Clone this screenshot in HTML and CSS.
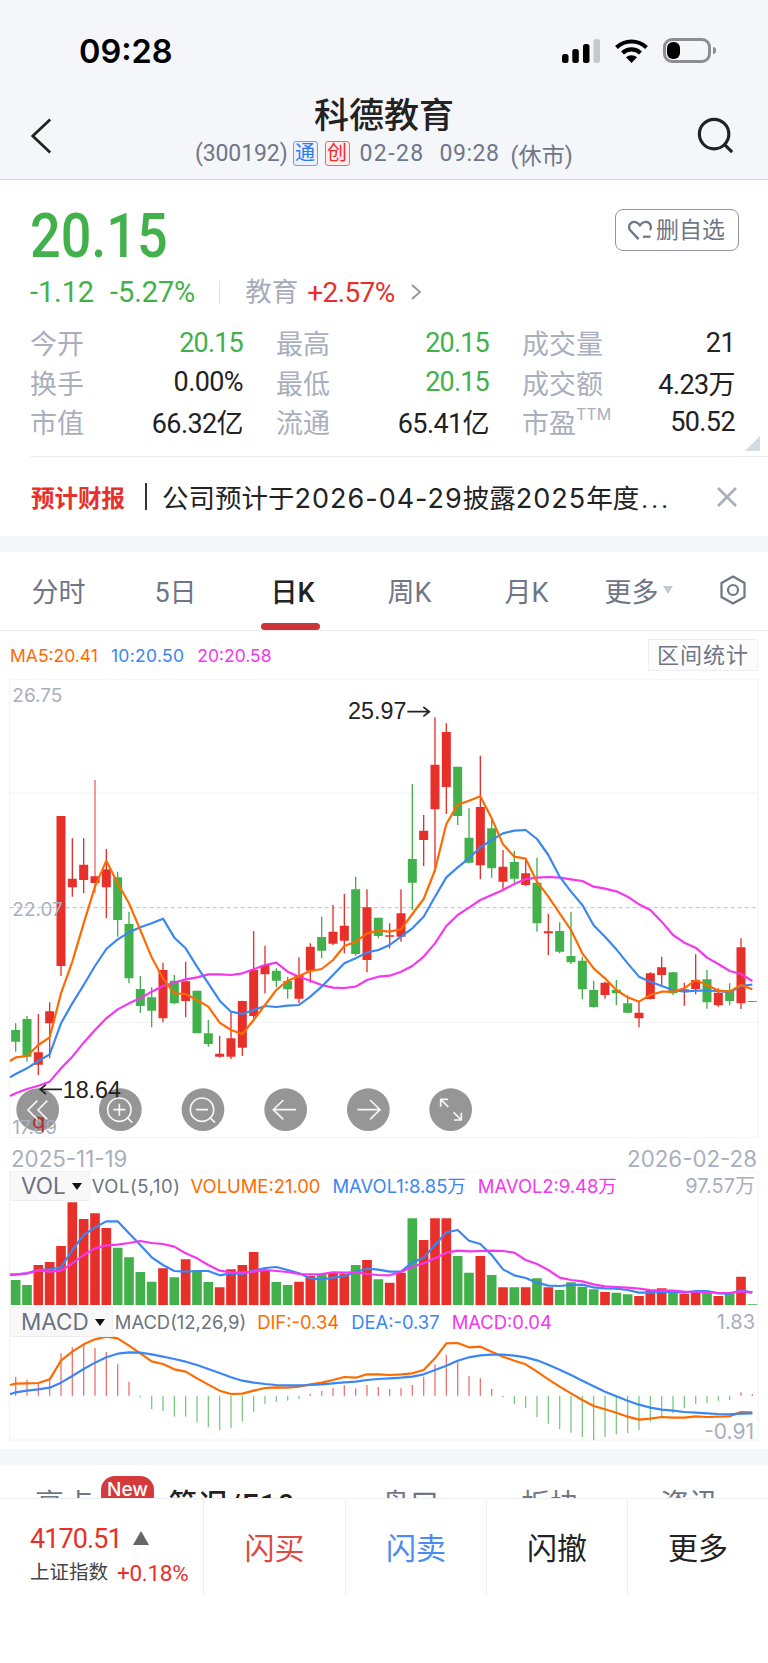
FILE: index.html
```html
<!DOCTYPE html>
<html lang="zh">
<head>
<meta charset="utf-8">
<title>科德教育</title>
<link rel="stylesheet" href="styles.css">
</head>
<body>
<div class="page">
  <header class="top">
    <div class="status">
      <span class="time">09:28</span>
      <div class="status-icons">
        <svg class="ic-signal" viewBox="0 0 38 24"><rect x="0" y="15" width="6.5" height="9" rx="2.5"/><rect x="10.3" y="10" width="6.5" height="14" rx="2.5"/><rect x="21" y="5" width="6.5" height="19" rx="2.5"/><rect class="off" x="31.5" y="0" width="6.5" height="24" rx="2.5"/></svg>
        <svg class="ic-wifi" viewBox="0 0 33 24"><path d="M1.5 8.5C10 .5 23 .5 31.500 8.500" /><path d="M7.500 14C12.800 9.200 20.200 9.200 25.500 14"/><path class="fill" d="M16.500 24L11 18.300C14 15.400 19 15.400 22 18.300Z"/></svg>
        <div class="battery"><span class="battery-level"></span></div>
      </div>
    </div>
    <nav class="nav">
      <svg class="ic-back" viewBox="0 0 24 40"><path d="M22 2L3 20L22 38"/></svg>
      <div class="nav-title">
        <h1>科德教育</h1>
        <div class="sub"><span>(300192)</span><b class="tag tag-blue">通</b><b class="tag tag-red">创</b><span class="sub-date">02-28</span><span class="sub-clock">09:28</span><span class="sub-state">(休市)</span></div>
      </div>
      <svg class="ic-search" viewBox="0 0 40 40"><circle cx="18" cy="18" r="15.500"/><path d="M29 29L37 37"/></svg>
    </nav>
  </header>

  <section class="quote">
    <div class="quote-head">
      <span class="price">20.15</span>
      <button class="fav"><svg viewBox="0 0 26 22"><path d="M23.500 10.500C26 6.500 23 1.500 18.500 2C16 2.300 14.500 3.500 13 5.500C11.500 3.500 10 2.300 7.500 2C3 1.500 0 6.500 2.500 10.500L11.500 20"/><path d="M16 17.500H24"/></svg>删自选</button>
    </div>
    <div class="change">
      <span class="green">-1.12</span><span class="green pct">-5.27%</span><i class="vline"></i><span class="sector">教育</span><span class="red sector-pct">+2.57%</span>
      <svg class="chev" viewBox="0 0 12 18"><path d="M2 2L10 9L2 16"/></svg>
    </div>
    <div class="stats">
      <div class="stat"><span class="k">今开</span><span class="v green">20.15</span></div>
      <div class="stat"><span class="k">最高</span><span class="v green">20.15</span></div>
      <div class="stat"><span class="k">成交量</span><span class="v">21</span></div>
      <div class="stat"><span class="k">换手</span><span class="v">0.00%</span></div>
      <div class="stat"><span class="k">最低</span><span class="v green">20.15</span></div>
      <div class="stat"><span class="k">成交额</span><span class="v">4.23万</span></div>
      <div class="stat"><span class="k">市值</span><span class="v">66.32亿</span></div>
      <div class="stat"><span class="k">流通</span><span class="v">65.41亿</span></div>
      <div class="stat"><span class="k">市盈<sup>TTM</sup></span><span class="v">50.52</span></div>
    </div>
    <i class="corner"></i>
  </section>

  <section class="notice">
    <b class="notice-tag">预计财报</b><i class="notice-bar"></i>
    <span class="notice-text">公司预计于<span class="num">2026-04-29</span>披露<span class="num">2025</span>年度<span class="dots">...</span></span>
    <svg class="ic-close" viewBox="0 0 20 20"><path d="M1 1L19 19M19 1L1 19"/></svg>
  </section>

  <div class="strip"></div>

  <section class="tabs">
    <span>分时</span><span>5日</span><span class="active">日K</span><span>周K</span><span>月K</span>
    <span class="more">更多<i class="tri"></i></span>
    <svg class="ic-hex" viewBox="0 0 26 30"><path d="M13 1.500L24.500 8V22L13 28.500L1.500 22V8Z"/><circle cx="13" cy="15" r="5"/></svg>
  </section>

  <section class="ma-row">
    <div class="ma"><span class="c-o">MA5:20.41</span><span class="c-b">10:20.50</span><span class="c-m">20:20.58</span></div>
    <span class="range">区间统计</span>
  </section>

  <section class="pane-main">
    <svg viewBox="0 57 2304 1401">
      <rect class="frame" x="29" y="58" width="2245" height="1374"/>
      <path class="grid" d="M29 399H2274M29 1087H2274"/>
      <path class="dash" d="M29 743H2274"/>
      <path class="wick r" d="M115 1062V1245M149 1027V1195M183 468V948M217 535V710M251 535V700M319 567V775M489 908V1087M557 905V1072M659 1127V1193M693 1057V1197M727 1022V1188M761 813V1075M795 857V1000M897 892V1030M931 850V968M999 735V855M1033 702V880M1101 688V937M1169 790V865M1203 688V845M1271 465V618M1305 172V635M1339 190V462M1441 287V658M1509 570V688M1577 595V678M1645 762V885M1815 965V1016M1917 1025V1102M1951 937V1018M1985 890V975M2053 968V1037M2087 883V1003M2155 985V1040M2223 835V1047"/>
      <path class="wick r soft" d="M285 360V700"/>
      <path class="body r" d="M115 1177V1214M149 1054V1090M183 468V918M217 656V682M251 614V660M285 649V669M319 628V682M489 930V1075M557 964V1023M659 1181V1190M693 1135V1190M727 1023V1163M761 930V1068M795 915V943M897 945V1016M931 860V932M999 815V851M1033 797V842M1101 742V900M1169 826V830M1203 760V830M1271 512V540M1305 314V448M1339 216V381M1441 441V616M1509 620V665M1577 640V675M1645 814V820M1815 968V1005M1917 1058V1075M1951 940V1017M1985 922V945M2053 988V994M2087 960V987M2155 998V1036M2223 862V1030"/>
      <path class="wick g" d="M47 1090V1175M81 1068V1205M353 635V830M387 755V970M421 948V1058M455 982V1102M523 945V1033M591 992V1120M625 1080V1160M829 925V982M863 950V1016M965 770V895M1067 650V887M1135 773V835M1237 372V750M1373 320V495M1407 445V610M1475 475V653M1543 572V668M1611 593V815M1679 787V880M1713 755V912M1747 890V1018M1781 962V1043M1849 960V1036M1883 1006V1060M2019 937V1005M2121 930V1046M2189 970V1036"/>
      <path class="body g" d="M47 1110V1145M81 1077V1190M353 652V780M387 792V955M421 987V1038M455 1012V1052M523 962V1030M591 992V1120M625 1120V1152M829 932V962M863 963V988M965 831V872M1067 688V882M1135 773V828M1237 597V668M1373 320V468M1407 533V608M1475 505V625M1543 606V656M1611 668V790M1679 813V875M1713 888V907M1747 902V988M1781 990V1041M1849 989V1000M1883 1030V1058M2019 937V1000M2121 958V1027M2189 990V1023M2257 1023V1026"/>
      <polyline class="line lm" points="30,1308 47,1300 81,1287 115,1277 149,1265 183,1225 217,1190 251,1148 285,1110 319,1075 353,1048 387,1030 421,1015 455,995 489,978 523,968 557,958 591,952 625,943 659,943 693,945 727,940 761,928 795,915 829,908 863,935 897,950 931,962 965,975 999,983 1033,984 1067,980 1101,960 1135,950 1169,947 1203,935 1237,918 1271,890 1305,850 1339,798 1373,765 1407,743 1441,720 1475,705 1509,690 1543,672 1577,657 1611,653 1645,651 1679,653 1713,658 1747,663 1781,680 1815,686 1849,694 1883,710 1917,733 1951,750 1985,785 2019,825 2053,848 2087,863 2121,893 2155,912 2189,933 2223,942 2257,963"/>
      <polyline class="line lb" points="30,1252 47,1242 81,1225 115,1203 149,1183 183,1090 217,1030 251,975 285,918 319,867 353,838 387,817 421,802 455,790 489,776 523,833 557,865 591,920 625,970 659,1022 693,1055 727,1062 761,1050 795,1038 829,1041 863,1037 897,1035 931,1010 965,980 999,945 1033,910 1067,895 1101,877 1135,870 1169,855 1203,830 1237,805 1271,770 1305,710 1339,652 1373,622 1407,595 1441,562 1475,540 1509,520 1543,512 1577,510 1611,537 1645,585 1679,650 1713,695 1747,735 1781,796 1815,830 1849,868 1883,910 1917,950 1951,965 1985,978 2019,990 2053,995 2087,992 2121,992 2155,993 2189,997 2223,978 2257,974"/>
      <polyline class="line lo" points="30,1203 47,1192 81,1188 115,1155 149,1132 183,1000 217,905 251,790 285,680 319,602 353,670 387,730 421,810 455,892 489,955 523,1000 557,1002 591,1020 625,1040 659,1088 693,1110 727,1122 761,1080 795,1035 829,990 863,962 897,948 931,933 965,927 999,900 1033,858 1067,845 1101,820 1135,812 1169,815 1203,808 1237,762 1271,717 1305,630 1339,492 1373,434 1407,422 1441,409 1475,475 1509,553 1543,590 1577,596 1611,665 1645,710 1679,760 1713,810 1747,880 1781,925 1815,955 1849,990 1883,1012 1917,1025 1951,1005 1985,995 2019,995 2053,985 2087,960 2121,975 2155,992 2189,995 2223,975 2257,988"/>
      <text class="axis" x="37" y="126">26.75</text>
      <text class="axis" x="37" y="768">22.07</text>
      <g class="btns">
        <circle cx="113" cy="1349" r="64"/><circle cx="361" cy="1349" r="64"/><circle cx="609" cy="1349" r="64"/><circle cx="857" cy="1349" r="64"/><circle cx="1105" cy="1349" r="64"/><circle cx="1352" cy="1349" r="64"/>
      </g>
      <text class="axis" x="37" y="1422">17.89</text>
      <text class="mark" x="1044" y="178">25.97</text>
      <path class="mark-arrow" d="M1222 155H1288M1270 141L1288 155L1270 169"/>
      <text class="mark" x="188" y="1313">18.64</text>
      <path class="mark-arrow" d="M186 1288H120M138 1274L120 1288L138 1302"/>
      <path class="q" d="M128 1372V1416M128 1388A13 15 0 1 1 102 1388A13 15 0 1 1 128 1388"/>
      <g class="btn-ic">
        <path d="M112 1322L84 1350L112 1378M142 1322L114 1350L142 1378"/>
        <circle cx="358" cy="1349" r="35"/><path d="M340 1349H376M358 1331V1367M383 1374L397 1388"/>
        <circle cx="606" cy="1349" r="35"/><path d="M588 1349H624M631 1374L645 1388"/>
        <path d="M888 1349H820M850 1320L820 1349L850 1378"/>
        <path d="M1072 1349H1140M1110 1320L1140 1349L1110 1378"/>
        <path d="M1322 1340V1318H1344M1322 1318L1345 1341M1384 1358V1380H1362M1384 1380L1361 1357"/>
      </g>
    </svg>
  </section>

  <div class="dates"><span>2025-11-19</span><span>2026-02-28</span></div>

  <section class="pane-sub">
    <svg viewBox="0 63 2304 810">
      <rect class="frame" x="29" y="63" width="2245" height="807"/>
      <path class="bar r" d="M115 465V345M149 465V336M183 465V288M217 465V157M251 465V207M285 465V190M319 465V234M489 465V355M557 465V328M659 465V412M693 465V358M727 465V345M761 465V306M795 465V360M897 465V395M931 465V378M999 465V368M1033 465V372M1101 465V330M1169 465V398M1203 465V368M1271 465V270M1305 465V205M1339 465V205M1441 465V318M1509 465V412M1577 465V412M1645 465V412M1815 465V426M1917 465V438M1951 465V420M1985 465V415M2053 465V432M2087 465V425M2155 465V438M2223 465V380"/>
      <path class="bar g" d="M47 465V390M81 465V405M353 465V293M387 465V322M421 465V366M455 465V395M523 465V382M591 465V362M625 465V396M829 465V396M863 465V405M965 465V372M1067 465V345M1135 465V388M1237 465V205M1373 465V318M1407 465V368M1475 465V375M1543 465V412M1611 465V385M1679 465V420M1713 465V397M1747 465V410M1781 465V418M1849 465V428M1883 465V433M2019 465V425M2121 465V425M2189 465V432M2257 465V463"/>
      <polyline class="line lb" points="30,375 47,374 81,370 115,360 149,358 183,352 217,300 251,255 285,232 319,214 353,214 387,250 421,285 455,322 489,345 523,363 557,365 591,363 625,363 659,376 693,370 727,372 761,362 795,354 829,351 863,360 897,370 931,385 965,388 999,383 1033,378 1067,366 1101,356 1135,359 1169,365 1203,365 1237,337 1271,323 1305,285 1339,247 1373,240 1407,272 1441,282 1475,315 1509,358 1543,376 1577,384 1611,398 1645,407 1679,408 1713,405 1747,404 1781,412 1815,415 1849,416 1883,420 1917,428 1951,428 1985,426 2019,426 2053,428 2087,423 2121,423 2155,430 2189,431 2223,421 2257,428"/>
      <polyline class="line lm" points="30,373 47,373 81,370 115,361 149,365 183,362 217,340 251,315 285,295 319,286 353,284 387,279 421,273 455,279 489,282 523,290 557,310 591,325 625,345 659,362 693,367 727,368 761,365 795,360 829,363 863,366 897,372 931,373 965,372 999,367 1033,368 1067,367 1101,372 1135,375 1169,376 1203,366 1237,350 1271,340 1305,325 1339,308 1373,302 1407,304 1441,303 1475,302 1509,303 1543,308 1577,330 1611,342 1645,360 1679,383 1713,390 1747,394 1781,403 1815,409 1849,411 1883,413 1917,416 1951,420 1985,421 2019,422 2053,425 2087,426 2121,426 2155,429 2189,429 2223,424 2257,427"/>
      <path class="mbar r" d="M47 737V680M81 737V690M115 737V700M149 737V690M183 737V610M217 737V592M251 737V585M285 737V594M319 737V606M353 737V643M387 737V695M931 737V731M965 737V723M999 737V713M1033 737V706M1067 737V715M1101 737V705M1135 737V711M1169 737V717M1203 737V715M1237 737V705M1271 737V680M1305 737V643M1339 737V614M1373 737V636M1407 737V677M1441 737V685M1475 737V717M2223 737V727M2257 737V732"/>
      <path class="mbar g" d="M421 737V742M455 737V777M489 737V783M523 737V800M557 737V800M591 737V817M625 737V832M659 737V840M693 737V835M727 737V814M761 737V785M795 737V762M829 737V755M863 737V752M897 737V747M1509 737V742M1543 737V763M1577 737V775M1611 737V802M1645 737V821M1679 737V838M1713 737V848M1747 737V861M1781 737V871M1815 737V861M1849 737V853M1883 737V849M1917 737V840M1951 737V815M1985 737V805M2019 737V790M2053 737V775M2087 737V762M2121 737V760M2155 737V752M2189 737V750"/>
      <polyline class="line lo" points="30,705 47,701 81,700 115,699 149,688 183,632 217,605 251,583 285,568 319,560 353,565 387,587 421,610 455,634 489,642 523,658 557,665 591,685 625,704 659,722 693,732 727,731 761,722 795,714 829,712 863,713 897,710 931,703 965,698 999,690 1033,681 1067,683 1101,673 1135,673 1169,675 1203,673 1237,670 1271,660 1305,625 1339,580 1373,579 1407,592 1441,590 1475,605 1509,620 1543,632 1577,643 1611,665 1645,688 1679,710 1713,730 1747,750 1781,768 1815,778 1849,788 1883,800 1917,809 1951,806 1985,801 2019,803 2053,803 2087,799 2121,801 2155,800 2189,799 2223,786 2257,787"/>
      <polyline class="line lb" points="30,733 47,727 81,722 115,718 149,713 183,698 217,678 251,657 285,638 319,622 353,611 387,607 421,608 455,613 489,620 523,627 557,635 591,645 625,657 659,669 693,682 727,692 761,698 795,702 829,705 863,706 897,706 931,705 965,703 999,700 1033,697 1067,695 1101,690 1135,687 1169,685 1203,683 1237,680 1271,673 1305,660 1339,647 1373,632 1407,622 1441,616 1475,614 1509,614 1543,617 1577,622 1611,631 1645,644 1679,659 1713,675 1747,692 1781,709 1815,725 1849,739 1883,752 1917,764 1951,773 1985,779 2019,782 2053,786 2087,788 2121,790 2155,792 2189,793 2223,791 2257,790"/>
    </svg>
    <div class="legend legend-vol">
      <span class="sel">VOL<i class="caret"></i></span>
      <span class="name">VOL(5,10)</span><span class="c-o">VOLUME:21.00</span><span class="c-b">MAVOL1:8.85万</span><span class="c-m">MAVOL2:9.48万</span>
      <span class="max">97.57万</span>
    </div>
    <div class="legend legend-macd">
      <span class="sel">MACD<i class="caret"></i></span>
      <span class="name">MACD(12,26,9)</span><span class="c-o">DIF:-0.34</span><span class="c-b">DEA:-0.37</span><span class="c-m">MACD:0.04</span>
      <span class="max">1.83</span>
    </div>
    <span class="min">-0.91</span>
  </section>

  <div class="strip strip-low"></div>

  <section class="tabs-low">
    <span class="first">亮点<b class="new">New</b></span><span class="on">简况/F10</span><span>盘口</span><span>板块</span><span>资讯</span>
  </section>

  <footer class="bar-bottom">
    <div class="index">
      <div class="index-top"><span class="red">4170.51</span><i class="up"></i></div>
      <div class="index-low"><span class="index-name">上证指数</span><span class="red">+0.18%</span></div>
    </div>
    <button class="act buy">闪买</button>
    <button class="act sell">闪卖</button>
    <button class="act">闪撤</button>
    <button class="act">更多</button>
  </footer>
</div>
</body>
</html>
```

FILE: styles.css
```css
* { box-sizing: border-box; }
html, body { margin: 0; padding: 0; background: #fff; }
body { font-family: Roboto, "Noto Sans CJK SC", sans-serif; color: #222; }
i { display: block; font-style: normal; }
.page { position: relative; width: 768px; height: 1663px; overflow: hidden; background: #fff; }
.green { color: #43b14b; }
.red { color: #e8302a; }
.c-o { color: #ff6a00; }
.c-b { color: #3a86f2; }
.c-m { color: #f536ee; }

/* header */
.top { height: 180px; background: #f4f6fa; border-bottom: 1px solid #d6d7da; }
.status { height: 90px; display: flex; justify-content: space-between; align-items: flex-start; padding: 33px 57px 0 79px; }
.time { font: 600 32.500px/38px Inter, sans-serif; color: #000; }
.status-icons { display: flex; align-items: center; gap: 15px; padding-top: 5px; }
.ic-signal { width: 38px; height: 24px; fill: #000; display: block; margin-right: 0; }
.ic-signal .off { fill: #c6c8cc; }
.ic-wifi { width: 33px; height: 24px; fill: none; stroke: #000; stroke-width: 4.2; display: block; }
.ic-wifi .fill { fill: #000; stroke: none; }
.battery { position: relative; width: 48px; height: 25px; border: 3px solid #8d8e92; border-radius: 9px; padding: 1px 0 0 1px; }
.battery::after { content: ""; position: absolute; right: -8px; top: 6px; width: 3px; height: 7px; background: #8d8e92; border-radius: 0 3px 3px 0; }
.battery-level { display: block; width: 13px; height: 17px; background: #000; border-radius: 6px; }
.nav { height: 89px; display: flex; justify-content: space-between; align-items: flex-start; padding: 0 33px 0 30px; position: relative; }
.ic-back { width: 22px; height: 40px; margin-top: 26px; fill: none; stroke: #222; stroke-width: 3; }
.ic-search { width: 38px; height: 38px; margin-top: 27px; fill: none; stroke: #222; stroke-width: 3.300; }
.nav-title { text-align: center; padding-left: 19px; }
.nav-title h1 { margin: 8px 0 0; font-size: 35px; line-height: 38px; font-weight: 500; letter-spacing: 0; color: #222; text-align: center; }
.sub { display: flex; align-items: center; justify-content: center; height: 27px; margin-top: 4px; font-size: 23px; color: #6f7686; letter-spacing: -.1px; white-space: nowrap; }
.tag { display: block; width: 25px; height: 25px; margin-left: 5px; border: 1px solid; border-radius: 3px; font-size: 20px; line-height: 22px; font-weight: 400; text-align: center; letter-spacing: 0; }
.tag-blue { color: #2f7bf2; border-color: #6a9ff5; background: #ebf2fe; }
.tag-red { color: #ef2b2b; border-color: #f06a6a; background: #fdeeee; margin-left: 7px; }
.sub-date { margin-left: 10px; letter-spacing: 1.400px; }
.sub-clock { margin-left: 15px; letter-spacing: .500px; }
.sub-state { margin-left: 11px; letter-spacing: .2px; }

/* quote */
.quote { position: relative; height: 277px; padding: 0 33px 0 30px; }
.quote::after { content: ""; position: absolute; left: 30px; right: 0; bottom: 0; height: 1px; background: #eceef3; }
.quote-head { display: flex; justify-content: space-between; align-items: flex-start; height: 94px; }
.price { font-size: 61px; line-height: 72px; margin-top: 20px; color: #43b14b; font-weight: 500; transform: scaleX(.885); transform-origin: left center; display: block; }
.fav { display: flex; align-items: center; height: 42px; width: 124px; margin: 29px -4px 0 0; padding: 0 0 0 11px; border: 1px solid #8f95a3; border-radius: 8px; background: #fff; font: 400 23px/1 Roboto, "Noto Sans CJK SC", sans-serif; color: #6f7686; }
.fav svg { width: 26px; height: 21px; margin-right: 3px; fill: none; stroke: #6f7686; stroke-width: 2.400; flex: none; }
.change { display: flex; align-items: center; height: 36px; font-size: 29px; letter-spacing: -.1px; }
.pct { margin-left: 16px; }
.vline { width: 1px; height: 23px; margin-left: 24px; background: #dfe1e6; }
.sector { margin-left: 25px; margin-top: -5px; color: #a6acb9; letter-spacing: 0; font-size: 26.500px; }
.sector-pct { margin-left: 9px; font-size: 28px; letter-spacing: -.6px; }
.chev { width: 12px; height: 18px; margin-left: 15px; fill: none; stroke: #8f95a3; stroke-width: 1.800; }
.stats { display: grid; grid-template-columns: repeat(3, 213px); column-gap: 33px; margin-top: 13px; }
.stat { display: flex; justify-content: space-between; align-items: center; height: 39.500px; }
.k { font-size: 27px; color: #a9afbd; white-space: nowrap; }
.k sup { font-size: 16px; line-height: 0; vertical-align: 13px; font-family: Inter, sans-serif; }
.v { font-size: 27px; letter-spacing: -.6px; white-space: nowrap; color: #222; }
.v.green { color: #43b14b; letter-spacing: -.8px; }
.corner { position: absolute; right: 8px; bottom: 6px; width: 0; height: 0; border-left: 15px solid transparent; border-bottom: 15px solid #d6dae2; }

/* notice */
.notice { display: flex; align-items: center; height: 79px; padding: 0 31px 0 31px; }
.notice-tag { font-size: 23.500px; color: #e8302a; font-weight: 700; white-space: nowrap; }
.notice-bar { width: 2px; height: 27px; margin: 0 15px 0 20px; background: #333; }
.notice-text { font-size: 26.500px; color: #222; white-space: nowrap; flex: 1; }
.num { font-family: Inter, sans-serif; font-size: 27px; letter-spacing: 1px; }
.dots { letter-spacing: 3px; margin-left: 2px; }
.ic-close { width: 20px; height: 20px; fill: none; stroke: #a9afbd; stroke-width: 2.800; }

.strip { height: 16px; background: #f4f6fa; }

/* tabs */
.tabs { position: relative; display: grid; grid-template-columns: repeat(6, 117px) 66px; align-items: center; height: 79px; border-bottom: 1px solid #e9eaee; font-size: 27px; color: #6f7686; text-align: center; }
.tabs span { display: block; margin-top: -2px; }
.tabs .active { position: relative; color: #222; font-weight: 500; }
.tabs .active::after { content: ""; position: absolute; left: 27px; top: 52px; width: 59px; height: 7px; border-radius: 4px; background: #c9343b; }
.more { display: flex !important; justify-content: center; align-items: center; padding-right: 10px; }
.tri { margin-left: 4px; width: 0; height: 0; border-left: 5px solid transparent; border-right: 5px solid transparent; border-top: 8px solid #c3c7d0; }
.ic-hex { width: 26px; height: 30px; justify-self: center; margin-left: -4px; margin-top: -2px; fill: none; stroke: #6f7686; stroke-width: 2.200; }

.ma-row { display: flex; justify-content: space-between; align-items: flex-start; height: 48px; padding: 8px 10px 0 10px; font: 400 17.500px/34px Inter, sans-serif; }
.ma { display: flex; gap: 13px; }
.ma .c-b { letter-spacing: .3px; }
.range { width: 110px; height: 32px; border: 1px solid #eeeff2; background: #fcfcfd; text-align: center; font: 400 22px/27px "Noto Sans CJK SC", sans-serif; color: #6f7686; letter-spacing: 1px; }

/* charts */
.pane-main svg, .pane-sub svg { display: block; width: 768px; }
.pane-main svg { height: 467px; }
.pane-sub { position: relative; height: 270px; }
.pane-sub svg { height: 270px; }
.frame { fill: #fff; stroke: #f1f2f4; stroke-width: 3; }
.grid { fill: none; stroke: #f1f2f4; stroke-width: 3; }
.dash { fill: none; stroke: #bfbfbf; stroke-width: 3; stroke-dasharray: 12 9; }
.wick { fill: none; stroke-width: 4; }
.wick.r { stroke: #e8302a; }
.wick.soft { stroke: #ec6a66; }
.wick.g { stroke: #43b14b; }
.body { fill: none; stroke-width: 27; }
.body.r { stroke: #e8302a; }
.body.g { stroke: #43b14b; }
.bar { fill: none; stroke-width: 29; }
.bar.r { stroke: #e8302a; }
.bar.g { stroke: #43b14b; }
.mbar { fill: none; stroke-width: 4; }
.mbar.r { stroke: #ee7470; }
.mbar.g { stroke: #7fcb84; }
.line { fill: none; stroke-width: 6.500; stroke-linejoin: round; }
.lo { stroke: #ff6a00; }
.lb { stroke: #3a86f2; }
.lm { stroke: #f536ee; }
.axis { font: 400 57px Inter, sans-serif; fill: #a9afbd; }
.mark { font: 400 70px "Liberation Sans", sans-serif; fill: #222; }
.mark-arrow { fill: none; stroke: #222; stroke-width: 5; }
.btns circle { fill: #8e8e8e; fill-opacity: .93; }
.q { fill: none; stroke: #b3302c; stroke-width: 6; }
.btn-ic { fill: none; stroke: #fff; stroke-width: 5; stroke-opacity: .92; }

.dates { display: flex; justify-content: space-between; align-items: center; height: 25px; padding: 0 11px; font: 400 22.300px/25px Inter, sans-serif; color: #a9afbd; }

.legend { position: absolute; left: 10px; right: 13px; display: flex; align-items: center; font: 400 18.400px/30px Inter, "Noto Sans CJK SC", sans-serif; white-space: nowrap; gap: 12px; }
.legend-vol { top: 0; }
.legend-macd { top: 136px; }
.sel { display: flex; align-items: center; height: 30px; padding: 0 7px 0 10px; margin-right: -10px; background: #f8f8f9; border: 1px solid #eeeff1; font-size: 22.500px; color: #6b7280; }
.caret { width: 0; height: 0; margin-left: 6px; border-left: 5.500px solid transparent; border-right: 5.500px solid transparent; border-top: 7px solid #111; }
.name { color: #6b7280; }
.legend-vol .name { letter-spacing: .6px; margin-right: -2px; }
.legend-macd .c-o { margin-left: -1px; }
.max { margin-left: auto; font-size: 20px; color: #a9afbd; }
.min { position: absolute; right: 14px; top: 249px; font: 400 21px/24px Inter, sans-serif; color: #a9afbd; }

.strip-low { margin-top: 8px; }
.tabs-low { display: grid; grid-template-columns: 128px 214px 136px 144px 134px; height: 60px; padding-top: 20px; font-size: 29px; line-height: 40px; color: #6f7686; text-align: center; }
.tabs-low .on { color: #222; font-weight: 500; letter-spacing: 1.500px; padding-right: 6px; }
.first { position: relative; }
.new { position: absolute; left: 101px; top: -9px; width: 53px; height: 34px; border-radius: 14px; background: #d33a3e; color: #fff; font: 500 19px/28px Inter, sans-serif; text-align: center; }

.bar-bottom { position: absolute; left: 0; right: 0; top: 1498px; bottom: 0; display: grid; grid-template-columns: 203px 142px 141px 141px 141px; grid-template-rows: 97px; background: #fff; border-top: 1px solid #eeeff2; }
.index { padding: 22px 0 0 30px; }
.index-top { display: flex; align-items: center; font-size: 27px; line-height: 36px; letter-spacing: -.9px; }
.up { width: 0; height: 0; margin: -2px 0 0 11px; border-left: 8px solid transparent; border-right: 8px solid transparent; border-bottom: 14px solid #666; }
.index-low { display: flex; align-items: center; font-size: 22.500px; line-height: 30px; letter-spacing: -.3px; margin-top: 1px; }
.index-name { font-size: 19.500px; color: #444; margin-right: 9px; letter-spacing: 0; }
.act { border: 0; border-left: 1px solid #eeeff2; background: #fff; padding: 0 0 4px; font: 400 30px/1 "Noto Sans CJK SC", sans-serif; color: #222; }
.buy { color: #e04a3f; }
.sell { color: #4a8cf0; }
```
